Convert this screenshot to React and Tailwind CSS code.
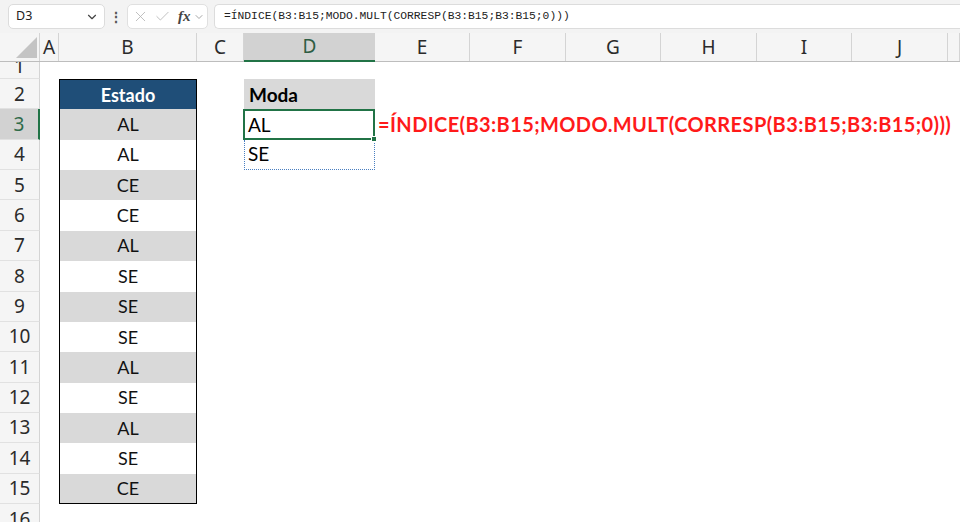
import { X, Check, ChevronDown } from 'lucide-react';

const cols = ['A', 'B', 'C', 'D', 'E', 'F', 'G', 'H', 'I', 'J', ''];
const estados = ['AL', 'AL', 'CE', 'CE', 'AL', 'SE', 'SE', 'SE', 'AL', 'SE', 'AL', 'SE', 'CE'];
const gridCols = 'grid grid-cols-[40px_19px_138px_47px_131px_95px_96px_95px_96px_95px_96px_1fr]';

const cellFont = { fontFamily: 'Lato, "Noto Sans", sans-serif' };
const headFont = { fontFamily: '"Noto Sans", "Open Sans", sans-serif' };

function ColumnHeader() {
  return (
    <div className={`${gridCols} h-[29px] bg-[#f5f5f5] border-b border-[#bdbdbd]`} style={headFont}>
      <div className="relative border-r border-[#d4d4d4]">
        <svg className="absolute right-[2px] bottom-[3px]" width="21" height="21" viewBox="0 0 21 21">
          <polygon points="21,0 21,21 0,21" fill="#c4c4c4" />
        </svg>
      </div>
      {cols.map((c, i) => (
        <div
          key={i}
          className={`flex items-center justify-center text-[19px] leading-none ${
            c === 'D'
              ? 'bg-[#d2d2d2] text-[#2f5d43] border-b-2 border-[#217346] -mb-px'
              : 'text-[#2b2b2b] border-r border-[#d4d4d4]'
          }`}
        >
          {c}
        </div>
      ))}
    </div>
  );
}

function RowNum({ n, active }) {
  // row 1 is scrolled so its top is hidden, row 16 is cut by the window
  const align = n === 1 ? 'justify-end' : 'justify-start';
  return (
    <div
      className={`flex flex-col overflow-hidden border-b border-[#e1e1e1] ${align} ${
        active
          ? 'bg-[#d2d2d2] text-[#2f6b4a] border-r-2 border-r-[#217346]'
          : 'bg-[#f5f5f5] text-[#2b2b2b] border-r border-r-[#d4d4d4]'
      }`}
      style={headFont}
    >
      <div className={`${n === 1 ? 'h-[23px]' : 'h-[30px]'} shrink-0 flex items-center justify-center text-[19px] leading-none`}>{n}</div>
    </div>
  );
}

function BCell({ row }) {
  if (row === 2) {
    return (
      <div className="flex items-center justify-center bg-[#1f4e78] text-white font-bold text-[18px] leading-none border border-black border-b-0" style={cellFont}>
        Estado
      </div>
    );
  }
  const v = estados[row - 3];
  const gray = row % 2 === 1;
  return (
    <div
      className={`flex items-center justify-center pb-[1px] text-[18px] leading-none text-[#111] border-x border-black ${gray ? 'bg-[#d9d9d9]' : 'bg-white'} ${
        row === 15 ? 'border-b' : ''
      }`}
      style={cellFont}
    >
      {v}
    </div>
  );
}

function DCell({ row }) {
  if (row === 2) {
    return (
      <div className="flex items-center pl-[5px] bg-[#d9d9d9] font-bold text-[19px] leading-none text-black" style={cellFont}>
        Moda
      </div>
    );
  }
  if (row === 3) {
    return (
      <div className="relative flex items-center pl-[3px] pb-[1px] text-[19px] leading-none text-black border-2 border-[#217346] -ml-px" style={cellFont}>
        AL
        <span className="absolute -right-[4px] -bottom-[4px] w-[6px] h-[6px] bg-[#217346] border border-white" />
      </div>
    );
  }
  if (row === 4) {
    return (
      <div className="flex items-center pl-[3px] pb-[1px] text-[19px] leading-none text-black border border-dotted border-t-0 border-[#4a7fc1]" style={cellFont}>
        SE
      </div>
    );
  }
  return <div />;
}

function Row({ n }) {
  const h = n === 1 ? 'h-[17px]' : n === 16 ? 'h-[30px]' : 'h-[30.36px]';
  return (
    <div className={`${gridCols} ${h}`}>
      <RowNum n={n} active={n === 3} />
      <div />
      {n >= 2 && n <= 15 ? <BCell row={n} /> : <div />}
      <div />
      {n >= 2 && n <= 4 ? <DCell row={n} /> : <div />}
      {n === 3 ? (
        <div className="flex items-center pl-[3px] pb-[1px] whitespace-nowrap overflow-visible z-10">
          <span className="text-[#ff1a1a] font-bold text-[20px] leading-none tracking-[0.4px]" style={cellFont}>
            =ÍNDICE(B3:B15;MODO.MULT(CORRESP(B3:B15;B3:B15;0)))
          </span>
        </div>
      ) : (
        <div />
      )}
      <div />
      <div />
      <div />
      <div />
      <div />
      <div />
    </div>
  );
}

export default function App() {
  const rows = Array.from({ length: 16 }, (_, i) => i + 1);
  return (
    <div className="w-[960px] h-[522px] overflow-hidden bg-white">
      {/* formula bar */}
      <div className="h-[33px] bg-[#f3f3f3] flex items-center pl-[8px] pr-0 gap-0">
        <div className="w-[97px] h-[25px] bg-white border border-[#dcdcdc] rounded-[5px] flex items-center justify-between pl-[7px] pr-[5px]">
          <span className="text-[12.5px] text-[#222]" style={headFont}>D3</span>
          <ChevronDown size={14} strokeWidth={2} className="text-[#444]" />
        </div>
        <div className="w-[22px] flex items-center justify-center text-[#555] text-[14px] font-bold leading-none">⋮</div>
        <div className="w-[81px] h-[25px] bg-white border border-[#e0e0e0] rounded-[5px] flex items-center pl-[4px] gap-[5px]">
          <X size={17} strokeWidth={1.2} className="text-[#b5b5b5]" />
          <Check size={17} strokeWidth={1.2} className="text-[#b5b5b5]" />
          <span className="text-[15px] italic font-bold text-[#444] leading-none ml-[2px]" style={{ fontFamily: '"Liberation Serif", serif' }}>
            fx
          </span>
          <ChevronDown size={12} strokeWidth={1.5} className="text-[#888] -ml-[3px]" />
        </div>
        <div className="ml-[6px] flex-1 h-[25px] bg-white border border-[#dcdcdc] border-r-0 rounded-l-[5px] flex items-center pl-[9px]">
          <span className="text-[11.3px] text-[#222]" style={{ fontFamily: '"Liberation Mono", monospace' }}>
            =ÍNDICE(B3:B15;MODO.MULT(CORRESP(B3:B15;B3:B15;0)))
          </span>
        </div>
      </div>
      <ColumnHeader />
      {rows.map((n) => (
        <Row key={n} n={n} />
      ))}
    </div>
  );
}
